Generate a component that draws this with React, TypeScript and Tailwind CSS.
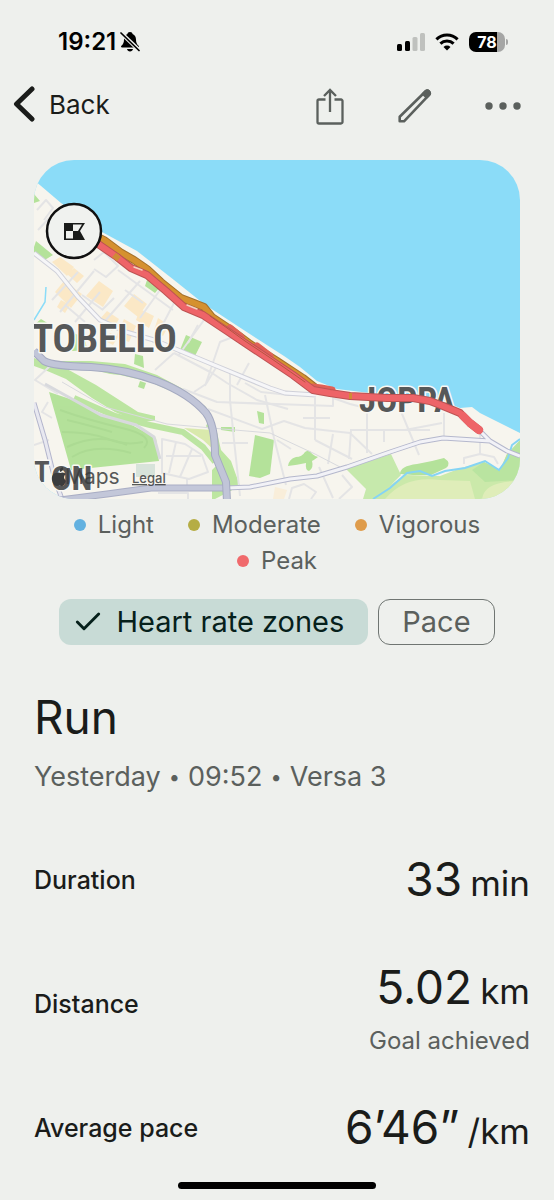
import { Check } from "lucide-react";

const zones = [
  { name: "Light", color: "bg-[#62b1e0]" },
  { name: "Moderate", color: "bg-[#b5ad45]" },
  { name: "Vigorous", color: "bg-[#df9c4b]" },
  { name: "Peak", color: "bg-[#f06a6c]" },
];

const metrics = [
  { label: "Duration", value: "33", unit: "min" },
  { label: "Distance", value: "5.02", unit: "km", note: "Goal achieved" },
  { label: "Average pace", value: "6’46”", unit: "/km" },
];

// Route drawn twice each, darker outline first
const outwardLeg =
  "M94 235L104 240L120 252L134 260L147 269L161 282L181 298L194 303L204 307L212 317L230 329L250 344L277 361L303 378L317 389";
const returnLeg =
  "M94 241L101 246L117 257L131 268L147 275L166 291L184 307L203 315L227 331L260 353L293 375L313 390L330 393L350 396L387 398L413 398L430 401L443 406L460 413L470 423L479 430";

const StatusBar = () => (
  <div className="flex h-20 items-center justify-between pt-1 pr-[46px] pl-[58px] text-black">
    <div className="flex items-center gap-1">
      <span className="text-2xl font-semibold">19:21</span>
      <svg width="20" height="22" viewBox="0 0 20 22" aria-hidden="true">
        <path
          d="M10 1c-1.600 0-2.400.8-2.600 1.900C5 3.900 4 6 4 8.500c0 3.500-1 4.700-2.600 6.300-.8.900-.4 1.700.7 1.700h15.800c1.100 0 1.500-.8.7-1.700C17 13.200 16 12 16 8.500c0-2.500-1-4.600-3.400-5.600C12.400 1.800 11.600 1 10 1zM7 18h6c-.3 1.500-1.400 2.400-3 2.400S7.300 19.500 7 18z"
          fill="currentColor"
        />
        <path d="M1 2l18 17" stroke="#eef0ed" strokeWidth="4" />
        <path d="M1 2l18 17.500" stroke="currentColor" strokeWidth="1.700" strokeLinecap="round" />
      </svg>
    </div>
    <div className="flex items-center gap-[10px]">
      <svg width="28" height="18" viewBox="0 0 28 18" aria-hidden="true">
        <rect x="0" y="11" width="5" height="7" rx="1.500" />
        <rect x="8" y="8" width="5" height="10" rx="1.500" />
        <rect x="15.500" y="4" width="5" height="14" rx="1.500" fill="#bfc1be" />
        <rect x="23" y="0" width="5" height="18" rx="1.500" fill="#bfc1be" />
      </svg>
      <svg width="24" height="18" viewBox="0 0 24 18" fill="none" stroke="currentColor" strokeWidth="3" aria-hidden="true">
        <path d="M1.400 6.300a15.200 15.200 0 0 1 21.200 0" />
        <path d="M5.400 10.700a9.500 9.500 0 0 1 13.200 0" />
        <path d="M12 17.500l-3.500-3.600a5 5 0 0 1 7 0z" fill="currentColor" stroke="none" />
      </svg>
      <div className="flex items-center gap-px">
        <div className="flex h-5 w-9 items-center justify-center rounded-[7px] bg-linear-to-r from-black from-78% to-[#a5a6a5] to-78% text-base font-bold text-white">
          78
        </div>
        <div className="h-[6px] w-[2px] rounded-r-full bg-[#a5a6a5]" />
      </div>
    </div>
  </div>
);

const Header = () => (
  <header className="flex h-[52px] items-center justify-between pr-[33px] pl-3 text-[#5b605d]">
    <button className="flex items-center gap-[14px] pb-1 text-[26px] text-[#1a1c1a]">
      <svg width="23" height="36" viewBox="0 0 23 36" fill="none" stroke="currentColor" strokeWidth="5" strokeLinecap="round" strokeLinejoin="round" aria-hidden="true">
        <path d="M20 3L4.500 18L20 33" />
      </svg>
      Back
    </button>
    <div className="flex items-center">
      <button aria-label="Share" className="mr-[54px]">
        <svg width="28" height="38" viewBox="0 0 28 38" fill="none" stroke="currentColor" strokeWidth="2.300" aria-hidden="true">
          <path d="M9.500 12.500H3A1.500 1.500 0 0 0 1.500 14v21A1.500 1.500 0 0 0 3 36.500h22a1.500 1.500 0 0 0 1.500-1.500V14a1.500 1.500 0 0 0-1.500-1.500h-6.500M14 25V3M8 9l6-6 6 6" />
        </svg>
      </button>
      <button aria-label="Edit" className="mr-[53px]">
        <svg width="34" height="34" viewBox="0 0 34 34" fill="none" stroke="currentColor" strokeWidth="2.600" strokeLinejoin="round" aria-hidden="true">
          <path d="M1.700 32.300v-4.500L27.700 2.200q1.600-1.400 3.200.2 1.700 1.800.2 3.400L6 32.300z" />
          <path d="M25 4.900l2.700-2.700q1.600-1.400 3.200.2 1.700 1.800.2 3.400l-2.500 2.600z" fill="currentColor" />
        </svg>
      </button>
      <button aria-label="More options">
        <svg width="36" height="8" viewBox="0 0 36 8" fill="currentColor" aria-hidden="true">
          <circle cx="4" cy="4" r="3.700" />
          <circle cx="18" cy="4" r="3.700" />
          <circle cx="32" cy="4" r="3.700" />
        </svg>
      </button>
    </div>
  </header>
);

const RouteMap = () => (
  <svg
    viewBox="34 160 486 339"
    className="block w-full rounded-[40px]"
    role="img"
    aria-label="Map of the run along the coast"
  >
    <rect x="34" y="160" width="486" height="339" fill="#8bdcf8" />
    {/* Land */}
    <path
      d="M34 180L61 203L102 232L137 251L174 280L204 304L236 325L284 356L300 367L317 381L337 389L370 393L403 396L450 404L460 408L472 407L480 413L520 433V499H34z"
      fill="#f7f5ee"
    />

    {/* Parks and woods */}
    <g fill="#b4e29a">
      <path d="M34 247L36 241L53 255L43 261L34 254zM34 194L40 201L34 203z" />
      <path d="M147 280L160 287L155 293L145 286zM186 335L202 342L195 356L180 350z" />
      <path d="M69 331L85 338L87 350L72 351z M34 325l7-6 8 5-5 8z" />
      <path d="M135 354L143 356L144 368L134 364zM257 411L264 413L264 424L259 423z" />
      <path d="M255 435L274 440L270 474L260 478L249 476z" />
      <path d="M288 466q1-7 8-9 6 0 9-5 3-2 5-1 2 4 8 6-4 3-6 4 2 7-3 10-4-1-3-8-9 2-18 3z" />
    </g>
    <path d="M34 359L44 363L57 361L91 361L125 364L157 375L183 389L206 407L216 428L221 450L231 461L240 486L215 499H212V470L217 465L213 435L195 412L180 395L150 382L120 375L52 369L34 362z" fill="#bde6a1" />
    <path d="M184 428L212 430L215 451L203 440z" fill="#d9e9ac" />
    <path d="M57 369L34 366L45 379L75 402L135 414L206 426L210 418L182 396L150 384L90 369z" fill="#f7f5ee" />
    <path d="M34 358L44 362L55 368L67 369L96 385L138 412L155 416V421L136 421L115 412L92 398L66 379L45 370L34 366z" fill="#bce5a1" />
    <path d="M140 381l6 2-2 6-6-2z M221 427h14v5l-14-2z" fill="#b4e29a" />
    <path d="M49 392L73 400L101 416L130 424L156 438L159 461L130 464L71 470z" fill="#b4e29a" />
    <g fill="none" stroke="#a8d890" strokeWidth="2" opacity=".7">
      <path d="M60 410q28 10 62 18t22 20" />
      <path d="M67 420q21 5 45 12M62 432q28 0 46 7t35 3" />
      <path d="M67 447q32-15 60-2M72 457q22-14 59-4" />
    </g>
    <path d="M74 398L115 416L150 425L183 432L203 447L215 462" fill="none" stroke="#bce5a1" strokeWidth="6" />
    <path d="M217 458L224 456L240 486L230 487z" fill="#bce5a1" />

    {/* Golf course and burn in the south east */}
    <path d="M346 469L391 454L401 475L377 499H363L366 489z" fill="#c6e9ac" />
    <path d="M370 499L405 475L440 476L461 468L484 462L500 470L507 454L520 458V499z" fill="#cbe9aa" />
    <path d="M507 454L520 440V480L485 482L472 470L484 462L500 470z" fill="#b9e4a0" />
    <path d="M385 499Q405 475 440 480L470 481L475 499zM482 499q2-18 38-18v18z" fill="#dfedb9" />
    <path d="M400 474q0-8 17-10l15-3 12-3q8 5 2 10l-15 7-18 0z" fill="#b4e29a" />
    <path d="M520 439L512 445L508 458L499 470L485 461L465 468L445 471L432 476L420 471L407 473L390 488L373 499" fill="none" stroke="#85d4f4" strokeWidth="2" />
    <path d="M34 320L45 302L46 287" fill="none" stroke="#8bdcf8" strokeWidth="1.500" />

    {/* Built-up blocks */}
    <g fill="#fbe8c6">
      <path d="M52 262L60 257L74 267L67 276zM55 292L64 281L82 294L71 308zM67 274l7-6 10 8-7 7z" />
      <path d="M86 296L99 281L113 291L103 307zM124 306L134 294L147 304L138 317zM116 337L124 319L136 326L129 342zM98 321L107 311L119 319L112 331z" />
      <path d="M61 300l9 5-5 8-8-6zM140 309L154 316L149 328L136 320zM158 318l11 7-6 11-9-6zM110 333l8 4-5 8-8-4z" />
      <path d="M275 487l12 3-3 9h-11z" opacity=".5" />
    </g>
    <rect x="136" y="464" width="19" height="13" fill="#d8e3da" />

    {/* Side streets */}
    <g fill="none" stroke="#e4e4e5" strokeWidth="2" strokeLinejoin="round">
      <path d="M37 210l9-10 7 8-9 12M38 230l14-15M52 300L78 272M60 312L94 271M75 322L100 292M105 321L140 281M140 318L160 290M153 343L174 303M178 356L204 320" />
      <path d="M94 260l10-8 14 14-12 11-12-8M114 298l-12 12M65 305l20 17M82 295l21 15M118 270l55 40M143 303l-18-13M188 343l10-18" />
      <path d="M155 370L174 353M205 386L220 342L238 335M237 385L249 363M174 353L212 373L227 383L257 400L288 409M194 392L206 384L217 366" />
      <path d="M183 389L217 402L270 404M217 402L333 406V398L350 404L370 409M208 409L262 429L284 421L305 428L350 433L372 454M350 430H430M405 430l37-7" />
      <path d="M230 372V400L234 440L240 496M265 395L274 438L286 485M245 383l16 9 28 3h18M315 398v42M367 405V453M400 409l19 46M333 434l-5 30M351 430l-2 29M384 429v13" />
      <path d="M315 440L352 459M319 467l14 31M277 440l14 9M303 418h27M444 413v26M480 434v20l-16 4v6M480 454l14 3 4 7M222 443h26" />
      <path d="M50 366L35 380L58 394M34 445L49 440M48 402l-6 10 10 6" />
      <path d="M162 439L185 444L202 455L208 472L189 479L162 473zM176 442l-7 31M192 449l-12 28M166 456h35M158 493h30v6M187 479v10M289 499l3-11 12-4 12 8-5 7M342 475l10 12-13 12" />
    </g>
    <g fill="none" stroke="#d8d9dd" strokeWidth="1">
      <path d="M62 382L105 407L167 424L223 429L270 433L315 454L340 467" />
      <path d="M45 384L72 399L101 415L136 425L154 437L160 459" strokeWidth="3" />
    </g>

    {/* Main roads */}
    <g fill="none" strokeLinejoin="round">
      <path d="M34 253L57 271L78 297L100 320L126 332L154 340L214 365L270 388L285 393L316 395" stroke="#cfd0d9" strokeWidth="5" />
      <path d="M34 253L57 271L78 297L100 320L126 332L154 340L214 365L270 388L285 393L316 395" stroke="#f6f6f8" strokeWidth="3" />
      <path d="M34 403L45 440L55 480L62 499" stroke="#b3b5cc" strokeWidth="5" />
      <path d="M34 403L45 440L55 480L62 499" stroke="#e8e8f0" strokeWidth="3" />
      <path d="M226 488L250 487L290 479L317 476L347 467L390 452L420 442L443 438L490 441L507 451L520 456M478 429L490 441" stroke="#b5b8cd" strokeWidth="5" />
      <path d="M226 488L250 487L290 479L317 476L347 467L390 452L420 442L443 438L490 441L507 451L520 456M478 429L490 441" stroke="#f2f2f7" strokeWidth="3" />
      <path d="M60 500L107 494L151 488H226" stroke="#a9adc4" strokeWidth="7" />
      <path d="M60 500L107 494L151 488H226" stroke="#c3c7d9" strokeWidth="5" />
      <path d="M34 351L44 361Q52 366 91 367Q125 369 157 381Q190 394 206 413Q215 425 215 455L226 482L227 501" stroke="#a5aac1" strokeWidth="8" />
      <path d="M34 351L44 361Q52 366 91 367Q125 369 157 381Q190 394 206 413Q215 425 215 455L226 482L227 501" stroke="#c1c5d8" strokeWidth="6" />
    </g>

    {/* Place names */}
    <g
      fill="#565859"
      stroke="#f9f8f4"
      strokeWidth="3"
      strokeLinejoin="round"
      paintOrder="stroke"
      fontFamily="'Liberation Sans Narrow', 'Roboto Condensed', Roboto, sans-serif"
      fontWeight="700"
    >
      <text x="32" y="352" fontSize="39">TOBELLO</text>
      <text x="359" y="412" fontSize="35">JOPPA</text>
      <text x="34" y="482" fontSize="29">T</text>
      <text x="51" y="490" fontSize="34">ON</text>
    </g>

    {/* Recorded route */}
    <g fill="none" strokeLinecap="round" strokeLinejoin="round">
      <path d={outwardLeg} stroke="#a4712b" strokeWidth="8" />
      <path d={outwardLeg} stroke="#d5912f" strokeWidth="6" />
      <path d="M230 328L241 337M257 346L270 356M313 387L321 388L332 390" stroke="#e06056" strokeWidth="7" />
      <path d={returnLeg} stroke="#bd5353" strokeWidth="8" />
      <path d={returnLeg} stroke="#ee6468" strokeWidth="6" />
      <path d="M463 416L470 423L479 430" stroke="#ee6468" strokeWidth="8" />
      <path d="M114 255l5 4M349 396h3" stroke="#d08b35" strokeWidth="6" strokeLinecap="butt" />
      <path d="M134 267l8 3M187 305l10 4" stroke="#f0d4c0" strokeWidth="1.500" />
      <path d="M210 316L227 328L245 341L272 359L305 382" stroke="#b35540" strokeWidth="1" />
    </g>

    {/* Finish marker */}
    <circle cx="74" cy="231" r="27" fill="#f0f2ef" stroke="#111" strokeWidth="2.500" />
    <path d="M64 223H85L80 231L85 240H64z" fill="#1a1c1a" />
    <path d="M73 224.500H82L78 231H73zM66 231H73V238.500H66z" fill="#f0f2ef" />

    {/* Attribution */}
    <g fill="#3b3c3d" fontFamily="Inter, sans-serif">
      <path d="M60 472q-1-4 3-5 1 4-3 5zM56 473q3-1 4 0 4-1.500 6 1-4 3 0 7-2 6-5 5-2-1-4 0c-5 0-8-12-1-13z" />
      <text x="65" y="484" fontSize="21" opacity=".85">Maps</text>
      <text x="132" y="483" fontSize="13" fontWeight="500" textDecoration="underline" opacity=".85">Legal</text>
    </g>
  </svg>
);

const App = () => {
  return (
    <main className="relative min-h-screen bg-[#eef0ed] font-['Inter','Noto_Sans',sans-serif] text-[#1a1c1a]">
      <StatusBar />
      <Header />

      <section className="px-[34px] pt-7">
        <RouteMap />
        <ul className="flex flex-wrap justify-center gap-x-[34px] px-6 pt-2 text-2xl leading-9 text-[#5b605d]">
          {zones.map((zone) => (
            <li key={zone.name} className="flex items-center gap-3">
              <span className={`size-3 rounded-full ${zone.color}`} />
              {zone.name}
            </li>
          ))}
        </ul>
        <div className="flex justify-center gap-[10px] pt-5">
          <button
            aria-pressed="true"
            className="flex h-[46px] items-center gap-3 rounded-xl bg-[#c8dbd6] pr-6 pl-[13px] text-[29px] text-[#06201b]"
          >
            <Check className="size-8" strokeWidth={2.2} />
            Heart rate zones
          </button>
          <button
            aria-pressed="false"
            className="h-[46px] rounded-xl border border-[#6f7572] px-[23px] text-[29px] text-[#5b605d]"
          >
            Pace
          </button>
        </div>
      </section>

      <section className="px-[34px] pt-10">
        <h1 className="text-[46px] leading-[64px]">Run</h1>
        <p className="flex items-center gap-2 pt-2 text-[27px] leading-10 text-[#5b605d]">
          <span>Yesterday</span>
          <span className="text-xl leading-10">•</span>
          <span>09:52</span>
          <span className="text-xl leading-10">•</span>
          <span>Versa 3</span>
        </p>
      </section>

      <dl className="pt-[22px] pr-6 pl-[34px]">
        {metrics.map((metric) => (
          <div key={metric.label} className="flex h-[124px] items-center justify-between">
            <dt className="text-[25px] font-medium">{metric.label}</dt>
            <dd className="flex flex-col items-end gap-1">
              <span className="text-[46px] leading-[64px]">
                {metric.value}
                <span className="pl-2 text-[35px]">{metric.unit}</span>
              </span>
              {metric.note && (
                <span className="text-2xl leading-7 text-[#5b605d]">{metric.note}</span>
              )}
            </dd>
          </div>
        ))}
      </dl>

      {/* Home indicator */}
      <div className="absolute inset-x-0 bottom-[11px] mx-auto h-[7px] w-[198px] rounded-full bg-black" />
    </main>
  );
};

export default App;
